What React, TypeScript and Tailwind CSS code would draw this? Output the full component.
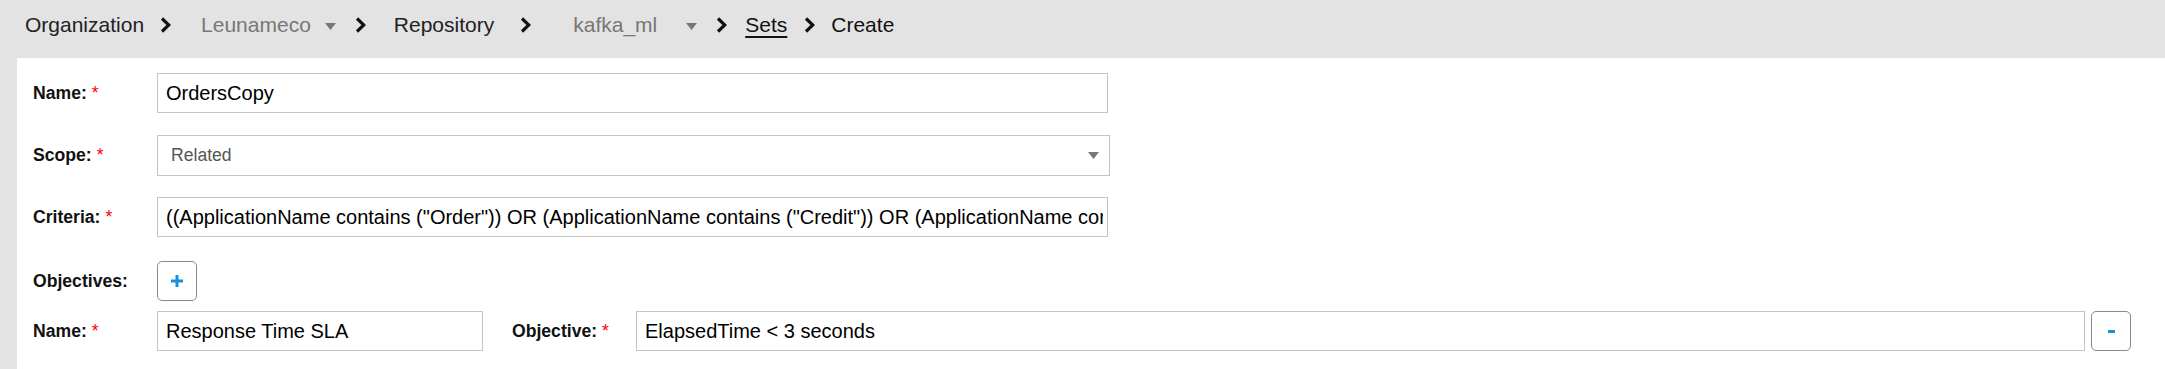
import React from "react";

function Chevron() {
  return (
    <svg width="11" height="18" viewBox="0 0 11 18" className="shrink-0">
      <polyline points="2,2.5 8.8,9 2,15.5" fill="none" stroke="#111" strokeWidth="3.2" strokeLinejoin="miter" />
    </svg>
  );
}

function Caret({ className = "" }: { className?: string }) {
  return (
    <svg width="11" height="7" viewBox="0 0 11 7" className={"shrink-0 " + className}>
      <polygon points="0,0 11,0 5.5,7" fill="#777" />
    </svg>
  );
}

function Label({ text, required = true }: { text: string; required?: boolean }) {
  return (
    <div className="w-[124px] shrink-0 text-[17.6px] font-bold text-[#111]">
      {text}
      {required && <span className="ml-[5px] font-normal text-[#f00]">*</span>}
    </div>
  );
}

const inputCls =
  "h-[40px] border border-[#c4c4c4] bg-white pl-[8px] pr-[4px] text-[20px] text-black outline-none";

export default function App() {
  return (
    <div className="min-h-screen bg-[#e3e3e3] font-['Liberation_Sans',Arial,sans-serif]">
      {/* breadcrumbs */}
      <div className="flex h-[58px] items-start pl-[25px] pt-[12px]">
        <div className="flex h-[25px] items-center text-[21px] leading-none">
          <span className="text-[#222]">Organization</span>
          <span className="ml-[16px]"><Chevron /></span>
          <span className="ml-[30px] text-[#777]">Leunameco</span>
          <Caret className="ml-[14px] mt-[3px]" />
          <span className="ml-[19px]"><Chevron /></span>
          <span className="ml-[28px] text-[#222]">Repository</span>
          <span className="ml-[26px]"><Chevron /></span>
          <span className="ml-[42px] text-[#777]">kafka_ml</span>
          <Caret className="ml-[29px] mt-[3px]" />
          <span className="ml-[19px]"><Chevron /></span>
          <span className="ml-[18px] text-[#111] underline underline-offset-[4px]">Sets</span>
          <span className="ml-[17px]"><Chevron /></span>
          <span className="ml-[16px] text-[#111]">Create</span>
        </div>
      </div>

      {/* form panel */}
      <div className="ml-[17px] min-h-[311px] bg-white pl-[16px] pt-[15px]">
        <div className="flex h-[40px] items-center">
          <Label text="Name:" />
          <input className={inputCls + " w-[951px]"} defaultValue="OrdersCopy" readOnly />
        </div>

        <div className="mt-[22px] flex h-[40px] items-center">
          <Label text="Scope:" />
          <div className="flex h-[41px] w-[953px] items-center justify-between border border-[#c4c4c4] pl-[13px] pr-[10px]">
            <span className="text-[17.6px] text-[#555]">Related</span>
            <Caret />
          </div>
        </div>

        <div className="mt-[22px] flex h-[40px] items-center">
          <Label text="Criteria:" />
          <input
            className={inputCls + " w-[951px]"}
            defaultValue={'((ApplicationName contains ("Order")) OR (ApplicationName contains ("Credit")) OR (ApplicationName contains ("Payment")))'}
            readOnly
          />
        </div>

        <div className="mt-[24px] flex h-[40px] items-center">
          <Label text="Objectives:" required={false} />
          <button className="flex h-[40px] w-[40px] items-center justify-center rounded-[5px] border border-[#8a8a8a] bg-white">
            <svg width="12" height="12" viewBox="0 0 12 12">
              <path d="M6 0v12M0 6h12" stroke="#1a8fdc" strokeWidth="3" />
            </svg>
          </button>
        </div>

        <div className="mt-[10px] flex h-[40px] items-center">
          <Label text="Name:" />
          <input className={inputCls + " w-[326px]"} defaultValue="Response Time SLA" readOnly />
          <div className="ml-[29px]">
            <Label text="Objective:" />
          </div>
          <input className={inputCls + " w-[1449px]"} defaultValue="ElapsedTime < 3 seconds" readOnly />
          <button className="ml-[6px] flex h-[40px] w-[40px] items-center justify-center rounded-[5px] border border-[#8a8a8a] bg-white">
            <span className="block h-[3px] w-[7px] bg-[#1a8fdc]" />
          </button>
        </div>
      </div>
    </div>
  );
}
